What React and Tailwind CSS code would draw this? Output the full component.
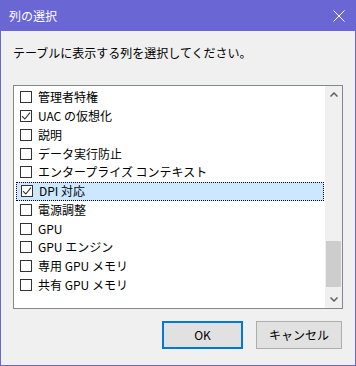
import React from "react";

const items = [
  { label: "管理者特権", checked: false },
  { label: "UAC の仮想化", checked: true },
  { label: "説明", checked: false },
  { label: "データ実行防止", checked: false },
  { label: "エンタープライズ コンテキスト", checked: false },
  { label: "DPI 対応", checked: true, focused: true },
  { label: "電源調整", checked: false },
  { label: "GPU", checked: false },
  { label: "GPU エンジン", checked: false },
  { label: "専用 GPU メモリ", checked: false },
  { label: "共有 GPU メモリ", checked: false },
];

function Checkbox({ checked }) {
  return (
    <div className="relative h-[12px] w-[12px] shrink-0 border border-[#333333] bg-white">
      {checked && (
        <svg className="absolute left-0 top-0" width="10" height="10" viewBox="0 0 10 10">
          <path d="M1 5.2 L3.8 8 L9 1.6" fill="none" stroke="#333" strokeWidth="1.1" />
        </svg>
      )}
    </div>
  );
}

function Row({ item }) {
  return (
    <div
      className={
        "flex h-[18.75px] items-center gap-[6px] pl-[4px] " +
        (item.focused ? "border border-dotted border-black bg-[#cce8ff] pl-[3px]" : "")
      }
    >
      <Checkbox checked={item.checked} />
      <span className="whitespace-nowrap leading-none">{item.label}</span>
    </div>
  );
}

export default function App() {
  return (
    <div
      className="flex h-[366px] w-[356px] flex-col border border-[#6a67d4] bg-[#f0f0f0] text-[12px] text-black"
      style={{ fontFamily: '"Noto Sans CJK JP", "Noto Sans", sans-serif' }}
    >
      <div className="flex h-[30px] shrink-0 items-center justify-between bg-[#6a67d4] pl-[8px] pr-[8px] text-white">
        <span className="text-[12px]">列の選択</span>
        <svg width="12" height="12" viewBox="0 0 12 12" className="mr-[2px]">
          <path d="M0.5 0.5 L11.5 11.5 M11.5 0.5 L0.5 11.5" stroke="white" strokeWidth="1" />
        </svg>
      </div>

      <div className="flex flex-1 flex-col px-[12px]">
        <div className="mt-[14px] h-[16px] leading-[16px]">テーブルに表示する列を選択してください。</div>

        <div className="mt-[24px] flex h-[224px] border border-[#828790] bg-white">
          <div className="flex-1 pl-[2px] pr-[1px] pt-[2px]">
            {items.map((it) => (
              <Row key={it.label} item={it} />
            ))}
          </div>
          <div className="flex w-[17px] flex-col items-center bg-[#f0f0f0]">
            <div className="flex h-[17px] w-full items-center justify-center">
              <svg width="8" height="5" viewBox="0 0 8 5">
                <path d="M0.5 4.5 L4 1 L7.5 4.5" fill="none" stroke="#606060" strokeWidth="1.5" />
              </svg>
            </div>
            <div className="flex-1" />
            <div className="mb-[4px] h-[46px] w-[15px] bg-[#cdcdcd]" />
            <div className="flex h-[17px] w-full items-center justify-center">
              <svg width="8" height="5" viewBox="0 0 8 5">
                <path d="M0.5 0.5 L4 4 L7.5 0.5" fill="none" stroke="#606060" strokeWidth="1.5" />
              </svg>
            </div>
          </div>
        </div>

        <div className="mt-[12px] flex justify-end gap-[13px] pr-[1px]">
          <button className="h-[28px] w-[81px] border-2 border-[#0078d7] bg-[#e1e1e1] text-[12px]">OK</button>
          <button className="h-[28px] w-[86px] border border-[#adadad] bg-[#e1e1e1] text-[12px]">キャンセル</button>
        </div>
      </div>
    </div>
  );
}
